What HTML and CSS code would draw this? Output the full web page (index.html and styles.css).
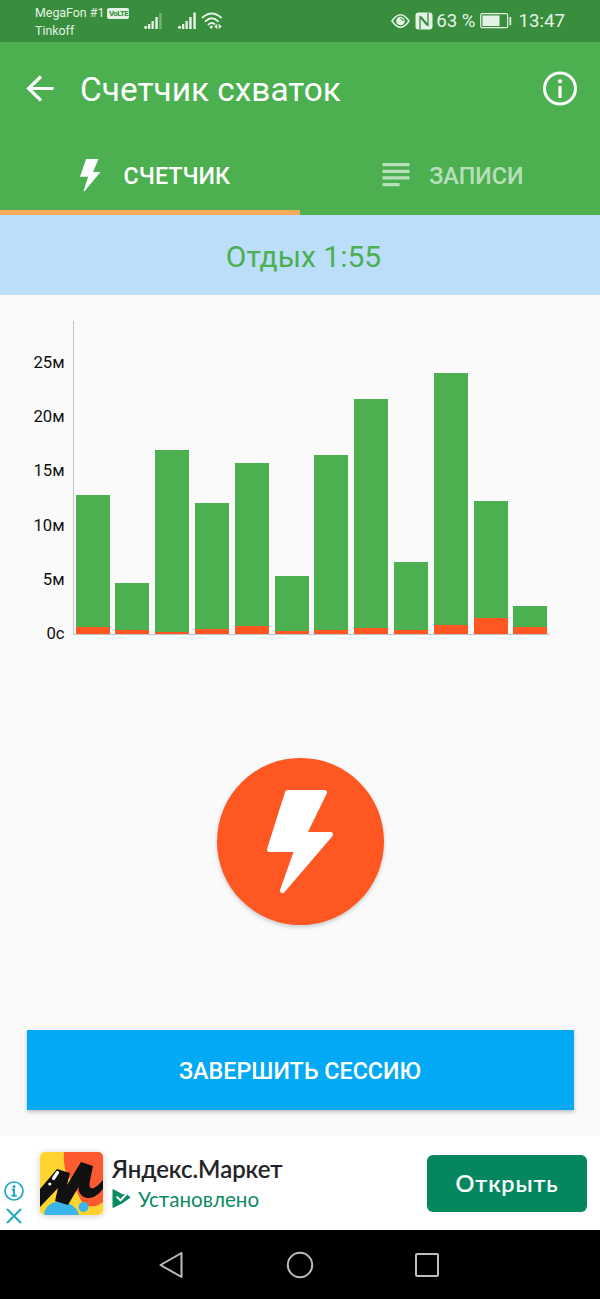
FILE: index.html
```html
<!DOCTYPE html>
<html lang="ru">
<head>
  <meta charset="UTF-8">
  <meta name="viewport" content="width=device-width, initial-scale=1">
  <title>Счетчик схваток</title>
  <link rel="stylesheet" href="styles.css">
</head>
<body>
  <div class="status-bar">
    <div class="carriers">
      <div class="carrier">MegaFon #1 <span class="volte">VoLTE</span></div>
      <div class="carrier">Tinkoff</div>
    </div>
    <svg class="signals" width="80" height="20" viewBox="0 0 80 20" fill="#e4f2e5">
      <circle cx="1.700" cy="17.300" r="1.600"/>
      <rect x="4" y="14" width="2.300" height="5"/>
      <rect x="7.500" y="11" width="2.300" height="8"/>
      <rect x="11.300" y="7" width="2.500" height="12"/>
      <rect x="15.200" y="3" width="2.500" height="16" opacity=".35"/>
      <circle cx="35.500" cy="17.300" r="1.600"/>
      <rect x="38" y="14" width="2.300" height="5"/>
      <rect x="41.500" y="11" width="2.300" height="8"/>
      <rect x="45.200" y="7" width="2.500" height="12"/>
      <rect x="49.300" y="2.500" width="2.500" height="16.500"/>
      <g fill="none" stroke="#e4f2e5" stroke-width="1.900" stroke-linecap="round">
        <path d="M58.500 7.500Q67.700 -0.500 77 7.500"/>
        <path d="M61.500 11.200Q67.700 5.500 74 11.200"/>
        <path d="M64.500 14.500Q67.700 11.800 70.500 14"/>
      </g>
      <circle cx="67.300" cy="17" r="1.600"/>
      <path d="M73.300 13.800v5.400L70.300 16.500zM74.700 13.800v5.400L77.700 16.500z"/>
    </svg>
    <div class="status-right">
      <svg width="19" height="16" viewBox="0 0 19 16">
        <path d="M1 8Q9.500 -4.500 18 8Q9.500 20.500 1 8Z" fill="none" stroke="#e4f2e5" stroke-width="1.600"/>
        <circle cx="9.500" cy="8" r="4.300" fill="#e4f2e5"/>
        <path d="M9.500 5.500A2.500 2.500 0 0 1 12 8" fill="none" stroke="#388e3c" stroke-width="1.200"/>
      </svg>
      <svg class="nfc" width="18" height="18" viewBox="0 0 18 18">
        <rect x=".5" y=".5" width="17" height="17" rx="3" fill="#e4f2e5"/>
        <path d="M5 17V5l7.300 8.500M13 1V13L5.700 4.500" fill="none" stroke="#388e3c" stroke-width="1.300"/>
      </svg>
      <span class="percent">63 %</span>
      <svg class="battery" width="32" height="16" viewBox="0 0 32 16">
        <rect x=".7" y=".7" width="27" height="14" rx="1.500" fill="none" stroke="#e4f2e5" stroke-width="1.200"/>
        <rect x="2.500" y="2.500" width="17" height="10.500" fill="#e4f2e5"/>
        <rect x="29.500" y="4" width="1.700" height="8" fill="#e4f2e5"/>
      </svg>
      <span class="clock">13:47</span>
    </div>
  </div>

  <header class="toolbar">
    <svg class="back" width="28" height="28" viewBox="0 0 28 28" fill="none" stroke="#fff" stroke-width="3.200">
      <path d="M27.500 13.500H3M15 1.500L2.500 13.500l12.500 12"/>
    </svg>
    <h1>Счетчик схваток</h1>
    <svg width="36" height="36" viewBox="0 0 36 36">
      <circle cx="18" cy="17.500" r="15.500" fill="none" stroke="#fff" stroke-width="3"/>
      <circle cx="18" cy="10.300" r="2.100" fill="#fff"/>
      <rect x="16.400" y="15" width="3.200" height="12" fill="#fff"/>
    </svg>
  </header>

  <nav class="tabs">
    <div class="tab tab-active">
      <svg width="22" height="34" viewBox="0 0 22 34">
        <path d="M7 1H19.500L14 14H21.500L5.500 33.200H4.500L9.100 18.800H1Z" fill="#fff"/>
      </svg>
      <span>СЧЕТЧИК</span>
    </div>
    <div class="tab tab-records">
      <svg width="28" height="26" viewBox="0 0 28 26" fill="#fff">
        <path d="M.5 1H27.500V4.300H.5zM.5 7.700H27.500V11H.5zM.5 14.300H27.500V17.600H.5zM.5 21H17.500V24.300H.5z"/>
      </svg>
      <span>ЗАПИСИ</span>
    </div>
  </nav>

  <div class="state">Отдых 1:55</div>

  <main>
    <div class="chart">
      <div class="axis">
        <span>25м</span>
        <span>20м</span>
        <span>15м</span>
        <span>10м</span>
        <span>5м</span>
        <span>0с</span>
      </div>
      <div class="bars">
        <div class="bar" style="height: 139.400px"><i style="height: 7px"></i></div>
        <div class="bar" style="height: 51px"><i style="height: 4px"></i></div>
        <div class="bar" style="height: 184.400px"><i style="height: 2px"></i></div>
        <div class="bar" style="height: 131px"><i style="height: 5px"></i></div>
        <div class="bar" style="height: 171.400px"><i style="height: 8px"></i></div>
        <div class="bar" style="height: 58.400px"><i style="height: 3px"></i></div>
        <div class="bar" style="height: 179px"><i style="height: 4px"></i></div>
        <div class="bar" style="height: 235px"><i style="height: 6px"></i></div>
        <div class="bar" style="height: 72px"><i style="height: 4px"></i></div>
        <div class="bar" style="height: 261px"><i style="height: 9px"></i></div>
        <div class="bar" style="height: 133px"><i style="height: 16px"></i></div>
        <div class="bar" style="height: 28.400px"><i style="height: 7px"></i></div>
      </div>
    </div>

    <button class="start">
      <svg width="167" height="167" viewBox="0 0 167 167">
        <path d="M71 35H108L87.500 77H114L66 133L80.500 92H53Z" transform="translate(-0.500 -0.500)" fill="#fff" stroke="#fff" stroke-width="5" stroke-linejoin="round"/>
      </svg>
    </button>

    <button class="finish">ЗАВЕРШИТЬ СЕССИЮ</button>
  </main>

  <div class="ad">
    <div class="ad-marks">
      <svg width="20" height="20" viewBox="0 0 20 20">
        <circle cx="10" cy="10" r="9" fill="none" stroke="#1fa9c4" stroke-width="1.700"/>
        <circle cx="10" cy="5.500" r="1.500" fill="#1fa9c4"/>
        <path d="M7.700 8.500H10V14.500M7.500 14.700H12.700" fill="none" stroke="#1fa9c4" stroke-width="2"/>
      </svg>
      <svg width="16" height="16" viewBox="0 0 16 16">
        <path d="M1 1L15 15M15 1L1 15" stroke="#1fa9c4" stroke-width="2"/>
      </svg>
    </div>
    <svg class="ad-logo" width="63" height="63" viewBox="0 0 63 63">
      <rect width="63" height="63" fill="#ffd42e"/>
      <path d="M24 0H63V50Q52 59 42 50L25 17Q23 8 24 0Z" fill="#fc5b32"/>
      <path d="M4 63Q5 51 19 49Q36 51 39 63Z" fill="#3bb5ea"/>
      <circle cx="43.500" cy="55" r="5" fill="#3bb5ea"/>
      <path d="M0 37L17 17L30 21L27 33L41 10L53 14L49.500 31Q49 38 54 36Q59 33 63 28V37Q55 47 47 46Q38 44 38.500 35L28 53L15 49L18 36L0 55Z" fill="#111"/>
      <path d="M17.500 20.500L13.500 26.500" stroke="#fff" stroke-width="3.200" stroke-linecap="round"/>
      <circle cx="9.800" cy="32" r="1.600" fill="#fff"/>
    </svg>
    <div class="ad-text">
      <div class="ad-title">Яндекс.Маркет</div>
      <div class="ad-sub">
        <svg width="19" height="19" viewBox="0 0 19 19">
          <path d="M1 .5L11 6L14.500 5L18 8.500L10 14L1 18.500Z" fill="#0b8a62" stroke="#0b8a62" stroke-linejoin="round"/>
          <path d="M4.500 7.500L8.500 11.500L15 4.500" fill="none" stroke="#fff" stroke-width="1.900"/>
        </svg>
        <span>Установлено</span>
      </div>
    </div>
    <button class="ad-open">Открыть</button>
  </div>

  <div class="nav-bar">
    <svg width="26" height="28" viewBox="0 0 26 28" fill="none" stroke="#bdbdbd" stroke-width="2" stroke-linejoin="round">
      <path d="M22.500 2V26L1.500 14Z"/>
    </svg>
    <svg width="28" height="28" viewBox="0 0 28 28" fill="none" stroke="#bdbdbd" stroke-width="2">
      <circle cx="14" cy="14" r="12.200"/>
    </svg>
    <svg width="26" height="26" viewBox="0 0 26 26" fill="none" stroke="#bdbdbd" stroke-width="2">
      <rect x="1" y="2" width="22" height="22" rx="1"/>
    </svg>
  </div>
</body>
</html>
```

FILE: styles.css
```css
* {
  box-sizing: border-box;
}

body {
  margin: 0;
  width: 600px;
  height: 1299px;
  overflow: hidden;
  display: flex;
  flex-direction: column;
  background: #fafafa;
  font-family: Roboto, sans-serif;
}

svg {
  display: block;
  flex: none;
}

button {
  border: none;
  padding: 0;
  font-family: inherit;
  color: #fff;
}

.status-bar {
  height: 42px;
  display: flex;
  background: #388e3c;
  color: #e4f2e5;
}

.carriers {
  width: 109px;
  margin-left: 35px;
  padding-top: 4px;
}

.carrier {
  height: 18px;
  line-height: 18px;
  font-size: 12.4px;
  white-space: nowrap;
}

.volte {
  display: inline-block;
  width: 22px;
  height: 11px;
  border-radius: 2px;
  background: #e4f2e5;
  color: #388e3c;
  font-size: 8px;
  font-weight: bold;
  letter-spacing: -0.7px;
  line-height: 11px;
  text-align: center;
  vertical-align: 1px;
}

.signals {
  margin-top: 10px;
}

.status-right {
  display: flex;
  align-items: center;
  margin-left: auto;
  margin-right: 35px;
  font-size: 18.7px;
}

.nfc {
  margin: 0 3px 0 5px;
}

.battery {
  margin: 0 6px 0 5px;
}

.toolbar {
  height: 94px;
  display: flex;
  align-items: center;
  padding: 0 22px 0 26px;
  background: #4caf50;
  color: #fff;
}

.toolbar h1 {
  flex: 1;
  margin: 0 0 0 26px;
  font-size: 33.4px;
  font-weight: 400;
}

.tabs {
  height: 79px;
  display: flex;
  background: #4caf50;
}

.tab {
  width: 300px;
  padding-top: 4px;
  display: flex;
  align-items: center;
  justify-content: center;
  border-bottom: 5px solid transparent;
  color: #fff;
  font-size: 23.3px;
  font-weight: 500;
}

.tab span {
  padding-top: 1px;
}

.tab-active {
  gap: 23px;
  padding-left: 8.6px;
  border-bottom-color: #f5ab59;
}

.tab-records {
  gap: 19px;
  padding-left: 5.6px;
}

.tab-records svg,
.tab-records span {
  opacity: 0.6;
}

.state {
  height: 80px;
  line-height: 84px;
  padding-left: 7px;
  background: #bbdefb;
  color: #4caf50;
  font-size: 30px;
  text-align: center;
}

main {
  height: 841px;
  display: flex;
  flex-direction: column;
  align-items: center;
}

.chart {
  width: 600px;
  height: 366px;
  padding-top: 26px;
  display: flex;
}

.axis {
  width: 73px;
  padding: 14.5px 8.4px 0 0;
  display: flex;
  flex-direction: column;
  color: #111;
  font-size: 16.7px;
  text-align: right;
}

.axis span {
  height: 54.4px;
  line-height: 54.4px;
  flex: none;
}

.bars {
  width: 477px;
  height: 314px;
  padding-left: 1.6px;
  display: flex;
  align-items: flex-end;
  gap: 5.8px;
  border-left: 1px solid #c4c4c4;
  border-bottom: 1px solid #c4c4c4;
}

.bar {
  width: 34px;
  flex: none;
  display: flex;
  align-items: flex-end;
  background: #4caf50;
}

.bar i {
  width: 100%;
  background: #ff5722;
}

.start {
  width: 167px;
  height: 167px;
  margin-top: 96.5px;
  border-radius: 50%;
  background: #ff5722;
  box-shadow: 0 2px 4px rgba(0, 0, 0, 0.2);
}

.finish {
  width: 547px;
  height: 80px;
  margin-top: 105.5px;
  padding-top: 2px;
  background: #03a9f4;
  box-shadow: 0 2px 4px rgba(0, 0, 0, 0.25);
  font-size: 23.3px;
  font-weight: 500;
}

.ad {
  height: 94px;
  display: flex;
  align-items: center;
  background: #fff;
}

.ad-marks {
  width: 28px;
  height: 94px;
  display: flex;
  flex-direction: column;
  align-items: center;
  gap: 7px;
  padding-top: 45px;
}

.ad-logo {
  margin-left: 12px;
  border-radius: 5px;
  box-shadow: 0 1px 7px rgba(0, 0, 0, 0.2);
}

.ad-text {
  width: 315px;
  padding-left: 9px;
  font-family: Lato, Inter, sans-serif;
}

.ad-title {
  line-height: 30px;
  padding-top: 1px;
  color: #202124;
  font-size: 24px;
  font-weight: 500;
  -webkit-text-stroke: 0.2px #202124;
}

.ad-sub {
  display: flex;
  align-items: center;
  gap: 7px;
  height: 30px;
  color: #0b8a62;
  font-size: 20.6px;
}

.ad-open {
  width: 160px;
  height: 57px;
  margin-left: 9px;
  border-radius: 6px;
  background: #04875f;
  font-family: Lato, Inter, sans-serif;
  font-size: 23.5px;
  font-weight: 500;
  letter-spacing: 0.9px;
  -webkit-text-stroke: 0.2px #fff;
}

.nav-bar {
  height: 69px;
  display: flex;
  align-items: center;
  justify-content: center;
  gap: 101px;
  background: #000;
}
```
